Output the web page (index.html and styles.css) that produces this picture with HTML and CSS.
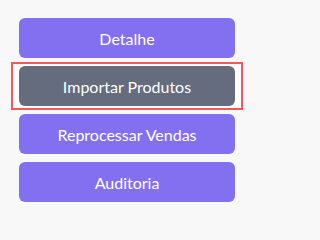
FILE: index.html
```html
<!DOCTYPE html>
<html>
<head>
<meta charset="utf-8">
<link rel="stylesheet" href="styles.css">
</head>
<body>
<div class="menu">
  <button class="btn">Detalhe</button>
  <div class="selected">
    <button class="btn btn-active">Importar Produtos</button>
  </div>
  <button class="btn">Reprocessar Vendas</button>
  <button class="btn">Auditoria</button>
</div>
</body>
</html>
```
FILE: styles.css
```css
html, body {
  margin: 0;
  padding: 0;
  background: #f8f8f8;
  width: 260px;
  height: 216px;
  overflow: hidden;
}
.menu {
  display: flex;
  flex-direction: column;
  gap: 8px;
  padding: 18px 0 0 19px;
  width: 216px;
}
.btn {
  display: block;
  width: 216px;
  height: 40px;
  border: none;
  border-radius: 6px;
  background: #8270f1;
  color: #ffffff;
  font-family: "Lato", "Noto Sans", sans-serif;
  font-size: 16px;
  padding: 0;
  margin: 0;
  text-align: center;
}
.btn-active {
  background: #646c7d;
}
.selected {
  margin: -4px -8px;
  padding: 2px 6px;
  border: 2px solid #f25a5a;
  background: #ffffff;
}
```
